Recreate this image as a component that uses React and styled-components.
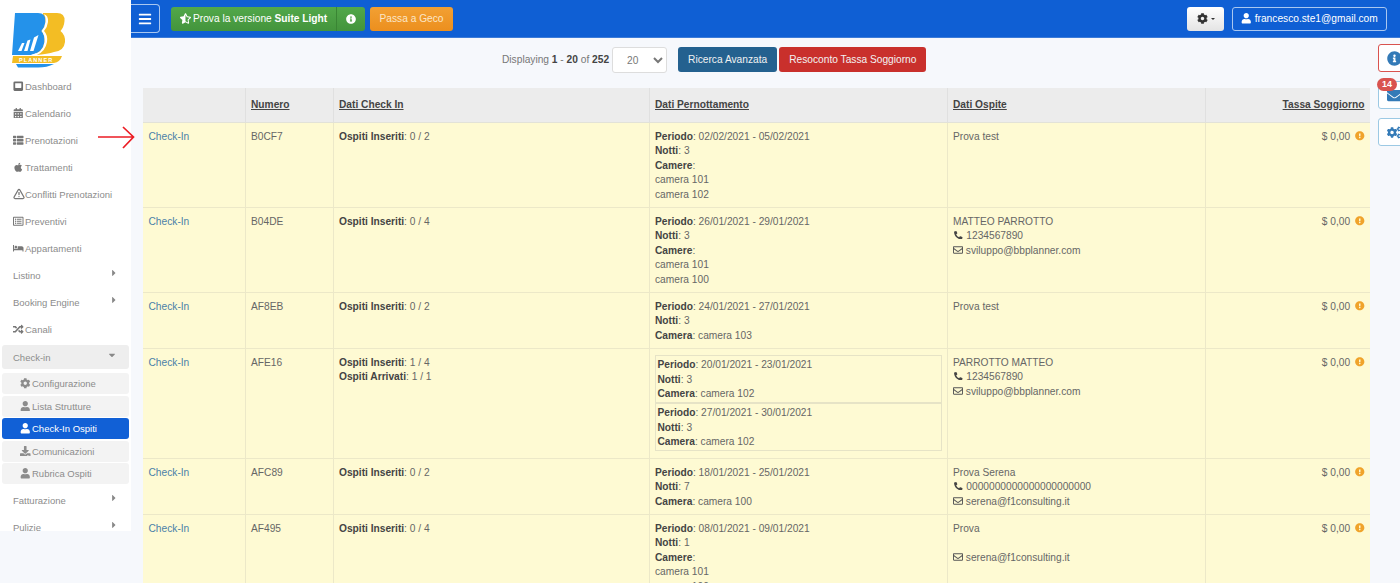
import styled, { createGlobalStyle } from 'styled-components';
import {
    FaCalendarAlt, FaThList, FaApple, FaRegListAlt, FaBed, FaRandom,
    FaCaretRight, FaCaretDown, FaCog, FaUser, FaDownload, FaBars, FaStarHalfAlt, FaInfoCircle,
    FaPhoneAlt, FaRegEnvelope, FaEnvelope, FaCogs, FaExclamationCircle,
} from 'react-icons/fa';
import { TriangleAlert } from 'lucide-react';

const GlobalStyle = createGlobalStyle`
    html, body { margin: 0; padding: 0; background: #f6f8fc; }
    body { font-family: "Liberation Sans", Arial, sans-serif; overflow: hidden; }
    * { box-sizing: border-box; }
`

const HddIcon = () => (
    <svg width="1em" height="1em" viewBox="0 0 12 12">
        <path d="M2 0.500H10Q11.500 0.500 11.500 2V9.500Q11.500 11.500 9.500 11.500H2.500Q0.500 11.500 0.500 9.500V2Q0.500 0.500 2 0.500Z" fill="#6f6f6f" />
        <path d="M2.500 2.500H9.500V7Q9.500 8 8.500 8H3.500Q2.500 8 2.500 7Z" fill="#ffffff" />
    </svg>
)

const WarnOutlineIcon = () => <TriangleAlert size="1.15em" strokeWidth={2.6} />

const menuTop = [
    { icon: HddIcon, label: 'Dashboard' },
    { icon: FaCalendarAlt, label: 'Calendario' },
    { icon: FaThList, label: 'Prenotazioni' },
    { icon: FaApple, label: 'Trattamenti' },
    { icon: WarnOutlineIcon, label: 'Conflitti Prenotazioni' },
    { icon: FaRegListAlt, label: 'Preventivi' },
    { icon: FaBed, label: 'Appartamenti' },
    { label: 'Listino', caret: true },
    { label: 'Booking Engine', caret: true },
    { icon: FaRandom, label: 'Canali' },
]

const subMenu = [
    { icon: FaCog, label: 'Configurazione' },
    { icon: FaUser, label: 'Lista Strutture' },
    { icon: FaUser, label: 'Check-In Ospiti', active: true },
    { icon: FaDownload, label: 'Comunicazioni' },
    { icon: FaUser, label: 'Rubrica Ospiti' },
]

const rows = [
    {
        id: 'B0CF7', checkin: ['0 / 2'],
        stays: [{ period: '02/02/2021 - 05/02/2021', nights: 3, rooms: ['camera 101', 'camera 102'] }],
        guest: { name: 'Prova test' },
    },
    {
        id: 'B04DE', checkin: ['0 / 4'],
        stays: [{ period: '26/01/2021 - 29/01/2021', nights: 3, rooms: ['camera 101', 'camera 100'] }],
        guest: { name: 'MATTEO PARROTTO', phone: '1234567890', mail: 'sviluppo@bbplanner.com' },
    },
    {
        id: 'AF8EB', checkin: ['0 / 2'],
        stays: [{ period: '24/01/2021 - 27/01/2021', nights: 3, room: 'camera 103', label: 'Camera' }],
        guest: { name: 'Prova test' },
    },
    {
        id: 'AFE16', checkin: ['1 / 4', '1 / 1'], boxed: true,
        stays: [
            { period: '20/01/2021 - 23/01/2021', nights: 3, room: 'camera 102', label: 'Camera' },
            { period: '27/01/2021 - 30/01/2021', nights: 3, room: 'camera 102', label: 'Camera' },
        ],
        guest: { name: 'PARROTTO MATTEO', phone: '1234567890', mail: 'sviluppo@bbplanner.com' },
    },
    {
        id: 'AFC89', checkin: ['0 / 2'],
        stays: [{ period: '18/01/2021 - 25/01/2021', nights: 7, room: 'camera 100', label: 'Camera' }],
        guest: { name: 'Prova Serena', phone: '0000000000000000000000', mail: 'serena@f1consulting.it' },
    },
    {
        id: 'AF495', checkin: ['0 / 4'],
        stays: [{ period: '08/01/2021 - 09/01/2021', nights: 1, rooms: ['camera 101', 'camera 100'] }],
        guest: { name: 'Prova', blankPhone: true, mail: 'serena@f1consulting.it' },
    },
]

const Logo = () => (
    <svg width="54" height="55" viewBox="0 0 54 55">
        <path d="M31 0H45Q53 0 52.500 8Q52 14 48.500 18Q53.500 22 53 29Q52 38 42 39Q36 41 24 42Z" fill="#f3bd24" />
        <path d="M3 0H26Q34 0 33.500 9Q33 14 29.500 18Q33 22 32.500 29Q31 40 19 42H0Z" fill="#2492ea" />
        <path d="M31.500 1Q36.500 2 36 9Q35.500 14 32 18Q36 22 35 29Q33.500 38 25 42H19Q31 40 32.500 29Q33 22 29.500 18Q33 14 33.500 9Q34 3 31.500 1Z" fill="#ffffff" />
        <path d="M6 38L10 30L12.500 30L9.500 38ZM12 38L15.500 27.500L18.500 26.500L15.500 38ZM18 38L22 24.500L26.500 22L21.500 38Z" fill="#ffffff" />
        <path d="M1 43H50Q48 49 42 50H0Z" fill="#f3bd24" />
        <text x="7" y="48.800" fontSize="5.500" fontWeight="700" letterSpacing="1.100" fill="#ffffff" fontFamily="Liberation Sans, sans-serif">PLANNER</text>
        <path d="M4 51H42Q34 55 24 54.500H6Z" fill="#2492ea" />
    </svg>
)

const App = () => {
    return (
        <Page>
            <GlobalStyle />
            <Sidebar>
                <LogoBox><Logo /></LogoBox>
                {menuTop.map((item) => (
                    <MenuItem key={item.label} $plain={!item.icon}>
                        {item.icon && <MenuIcon><item.icon /></MenuIcon>}
                        {item.label}
                        {item.caret && <Caret><FaCaretRight /></Caret>}
                    </MenuItem>
                ))}
                <MenuGroup>
                    Check-in
                    <Caret><FaCaretDown /></Caret>
                </MenuGroup>
                <SubList>
                    {subMenu.map((item) => (
                        <SubItem key={item.label} $active={item.active}>
                            <SubIcon><item.icon /></SubIcon>
                            {item.label}
                        </SubItem>
                    ))}
                </SubList>
                <MenuItem $plain>Fatturazione<Caret><FaCaretRight /></Caret></MenuItem>
                <MenuItem $plain>Pulizie<Caret><FaCaretRight /></Caret></MenuItem>
            </Sidebar>

            <Main>
                <Topbar>
                    <Burger><FaBars /></Burger>
                    <GreenGroup>
                        <GreenMain><FaStarHalfAlt /><span>Prova la versione <b>Suite Light</b></span></GreenMain>
                        <GreenInfo><FaInfoCircle /></GreenInfo>
                    </GreenGroup>
                    <OrangeButton>Passa a Geco</OrangeButton>
                    <TopRight>
                        <GearButton><FaCog /><SmallCaret /></GearButton>
                        <UserButton><FaUser /> francesco.ste1@gmail.com</UserButton>
                    </TopRight>
                </Topbar>

                <Toolbar>
                    <Pager>Displaying <b>1</b> - <b>20</b> of <b>252</b></Pager>
                    <PageSelect defaultValue="20">
                        <option value="20">20</option>
                    </PageSelect>
                    <ActionButton $color="#24618f">Ricerca Avanzata</ActionButton>
                    <ActionButton $color="#c9302c">Resoconto Tassa Soggiorno</ActionButton>
                </Toolbar>

                <Table>
                    <colgroup>
                        <col width="102" />
                        <col width="88" />
                        <col width="316" />
                        <col width="298" />
                        <col width="258" />
                        <col width="165" />
                    </colgroup>
                    <thead>
                        <tr>
                            <Th></Th>
                            <Th><u>Numero</u></Th>
                            <Th><u>Dati Check In</u></Th>
                            <Th><u>Dati Pernottamento</u></Th>
                            <Th><u>Dati Ospite</u></Th>
                            <Th $right><u>Tassa Soggiorno</u></Th>
                        </tr>
                    </thead>
                    <tbody>
                        {rows.map((row) => (
                            <tr key={row.id}>
                                <Td><CheckLink>Check-In</CheckLink></Td>
                                <Td>{row.id}</Td>
                                <Td>
                                    <div><b>Ospiti Inseriti</b>: {row.checkin[0]}</div>
                                    {row.checkin[1] && <div><b>Ospiti Arrivati</b>: {row.checkin[1]}</div>}
                                </Td>
                                <Td $tight={row.boxed}>
                                    {row.stays.map((stay) => {
                                        const content = (
                                            <>
                                                <div><b>Periodo</b>: {stay.period}</div>
                                                <div><b>Notti</b>: {stay.nights}</div>
                                                {stay.rooms ? (
                                                    <>
                                                        <div><b>Camere</b>:</div>
                                                        {stay.rooms.map((room) => <div key={room}>{room}</div>)}
                                                    </>
                                                ) : (
                                                    <div><b>{stay.label}</b>: {stay.room}</div>
                                                )}
                                            </>
                                        )
                                        return row.boxed
                                            ? <StayBox key={stay.period}>{content}</StayBox>
                                            : <div key={stay.period}>{content}</div>
                                    })}
                                </Td>
                                <Td>
                                    <div>{row.guest.name}</div>
                                    {row.guest.phone && <div><PhoneIcon /> {row.guest.phone}</div>}
                                    {row.guest.blankPhone && <div>&nbsp;</div>}
                                    {row.guest.mail && <div><MailIcon /> {row.guest.mail}</div>}
                                </Td>
                                <Td $right>$ 0,00 <WarnIcon /></Td>
                            </tr>
                        ))}
                    </tbody>
                </Table>
            </Main>

            <ArrowMark width="38" height="24" viewBox="0 0 38 24">
                <path d="M0 12H35M25 2L35.500 12L25 23" fill="none" stroke="#ec1c24" strokeWidth="1.700" />
            </ArrowMark>

            <SideTabs>
                <SideTab $border="#d9534f"><FaInfoCircle /></SideTab>
                <SideTab $border="#9cc9e4">
                    <Badge>14</Badge>
                    <FaEnvelope />
                </SideTab>
                <SideTab $border="#9cc9e4"><FaCogs /></SideTab>
            </SideTabs>
        </Page>
    )
}

const Page = styled.div`
    position: relative;
    display: flex;
    align-items: flex-start;
    width: 1400px;
    height: 583px;
    overflow: hidden;
    background: #f6f8fc;
`

const Sidebar = styled.aside`
    flex: 0 0 131px;
    height: 531px;
    overflow: hidden;
    background: #ffffff;
`

const LogoBox = styled.div`
    height: 72.5px;
    padding: 13px 0 0 12px;
    svg { display: block; }
`

const MenuItem = styled.div`
    position: relative;
    display: flex;
    align-items: center;
    height: 27px;
    padding-left: 13px;
    font-size: 9.5px;
    color: #8c8c8c;
`

const MenuIcon = styled.span`
    display: inline-flex;
    width: 12px;
    font-size: 10.5px;
    color: #777777;
`

const Caret = styled.span`
    position: absolute;
    right: 12px;
    top: 50%;
    display: inline-flex;
    margin-top: -7px;
    font-size: 10px;
    color: #888888;
`

const MenuGroup = styled.div`
    position: relative;
    display: flex;
    align-items: center;
    height: 24px;
    margin: 2.5px 2px 4px;
    padding-left: 11px;
    border-radius: 3px;
    background: #eeeeee;
    font-size: 9.5px;
    color: #8c8c8c;
`

const SubList = styled.div`
    display: flex;
    flex-direction: column;
    gap: 1.5px;
    margin: 0 2px 2.5px;
`

const SubItem = styled.div`
    display: flex;
    align-items: center;
    height: 21px;
    padding-left: 18px;
    border-radius: 3px;
    font-size: 9.5px;
    background: ${(p) => (p.$active ? '#1160d6' : '#f3f3f3')};
    color: ${(p) => (p.$active ? '#ffffff' : '#8c8c8c')};
`

const SubIcon = styled.span`
    display: inline-flex;
    width: 12px;
    font-size: 10.5px;
`

const Main = styled.main`
    flex: 1;
    min-width: 0;
`

const Topbar = styled.header`
    display: flex;
    align-items: center;
    height: 38px;
    padding-right: 13px;
    background: #0f5fd4;
    border-bottom: 1px solid #3c7bd8;
`

const Burger = styled.div`
    display: flex;
    align-items: center;
    justify-content: center;
    width: 29px;
    height: 29px;
    border: 1px solid #a9c7f0;
    border-left: none;
    border-radius: 0 4px 4px 0;
    font-size: 14px;
    color: #ffffff;
`

const GreenGroup = styled.div`
    display: flex;
    height: 24px;
    margin-left: 11px;
    border-radius: 3px;
    overflow: hidden;
    color: #ffffff;
    font-size: 10.2px;
    background: linear-gradient(#52a84a, #43943c);
`

const GreenMain = styled.div`
    display: flex;
    align-items: center;
    gap: 2px;
    width: 166px;
    padding-left: 9px;
    white-space: pre;
    border-right: 1px solid #3a8534;
    b { font-weight: 700; }
    svg { font-size: 11px; }
`

const GreenInfo = styled.div`
    display: flex;
    align-items: center;
    justify-content: center;
    width: 28px;
    font-size: 10px;
`

const OrangeButton = styled.div`
    display: flex;
    align-items: center;
    justify-content: center;
    width: 83px;
    height: 24px;
    margin-left: 5px;
    border-radius: 3px;
    background: linear-gradient(#f2a033, #ec8f1e);
    color: #fbe6c8;
    font-size: 10.2px;
`

const TopRight = styled.div`
    display: flex;
    align-items: center;
    gap: 8px;
    margin-left: auto;
`

const GearButton = styled.div`
    display: flex;
    align-items: center;
    justify-content: center;
    gap: 3px;
    width: 37px;
    height: 24px;
    border-radius: 3px;
    background: linear-gradient(#ffffff, #e4e4e4);
    color: #333333;
    font-size: 11px;
`

const SmallCaret = styled.span`
    width: 0;
    height: 0;
    border-left: 2.500px solid transparent;
    border-right: 2.500px solid transparent;
    border-top: 2.500px solid #333333;
`

const UserButton = styled.div`
    display: flex;
    align-items: center;
    justify-content: center;
    gap: 3px;
    width: 155px;
    height: 24px;
    border: 1px solid #a9c7f0;
    border-radius: 3px;
    color: #ffffff;
    font-size: 10.2px;
    svg { font-size: 10.5px; }
`

const Toolbar = styled.div`
    display: flex;
    align-items: flex-start;
    height: 50px;
    padding: 9px 0 0 371px;
`

const Pager = styled.div`
    margin-top: 7px;
    font-size: 10.2px;
    color: #777777;
    b { color: #444444; }
`

const PageSelect = styled.select`
    width: 55px;
    height: 26px;
    margin: 0 11px 0 3px;
    padding-left: 10px;
    border: 1px solid #dddddd;
    border-radius: 3px;
    background: #ffffff;
    font-family: inherit;
    font-size: 10.2px;
    color: #777777;
`

const ActionButton = styled.div`
    display: flex;
    align-items: center;
    height: 25px;
    margin-right: 2px;
    padding: 0 10px;
    border-radius: 3px;
    background: ${(p) => p.$color};
    color: #f2f2f2;
    font-size: 10.2px;
`

const Table = styled.table`
    width: 1227px;
    margin-left: 12px;
    border-collapse: collapse;
    table-layout: fixed;
    font-size: 10.2px;
    line-height: 14.5px;
    color: #666666;
    b { color: #444444; font-weight: 700; }
`

const Th = styled.th`
    height: 34px;
    padding: 0 5.5px;
    background: #ececec;
    border-left: 1px solid #e0e0e0;
    border-bottom: 1px solid #e2e2d8;
    text-align: ${(p) => (p.$right ? 'right' : 'left')};
    font-size: 10.2px;
    font-weight: 700;
    color: #444444;
    &:first-child { border-left: none; }
`

const Td = styled.td`
    padding: ${(p) => (p.$tight ? '6.5px 5px' : '7px 5.5px 4.5px')};
    vertical-align: top;
    background: #fefad3;
    border-left: 1px solid #ece8c8;
    border-bottom: 1px solid #ece8c8;
    text-align: ${(p) => (p.$right ? 'right' : 'left')};
    &:first-child { border-left: none; }
`

const CheckLink = styled.a`
    color: #4a7fa8;
`

const StayBox = styled.div`
    height: 48px;
    padding: 2px 2px 0;
    border: 1px solid #e6e3c6;
`

const PhoneIcon = styled(FaPhoneAlt)`
    font-size: 8.5px;
    color: #444444;
    margin: 0 1px;
`

const MailIcon = styled(FaRegEnvelope)`
    font-size: 10px;
    color: #555555;
    vertical-align: -1px;
`

const WarnIcon = styled(FaExclamationCircle)`
    font-size: 9.5px;
    color: #f0a32a;
    margin-left: 2px;
    vertical-align: -1px;
`

const ArrowMark = styled.svg`
    position: absolute;
    left: 98px;
    top: 125px;
`

const SideTabs = styled.div`
    position: absolute;
    left: 1378px;
    top: 44px;
    display: flex;
    flex-direction: column;
    gap: 9px;
`

const SideTab = styled.div`
    position: relative;
    display: flex;
    align-items: center;
    width: 30px;
    height: 28px;
    padding-left: 8px;
    border: 1px solid ${(p) => p.$border};
    border-radius: 3px 0 0 3px;
    background: #ffffff;
    font-size: 15px;
    color: #337ab7;
`

const Badge = styled.span`
    position: absolute;
    left: -2px;
    top: -4px;
    width: 20px;
    height: 13px;
    border-radius: 7px;
    background: #d9534f;
    color: #ffffff;
    font-size: 9px;
    font-weight: 700;
    line-height: 13px;
    text-align: center;
`

export default App
